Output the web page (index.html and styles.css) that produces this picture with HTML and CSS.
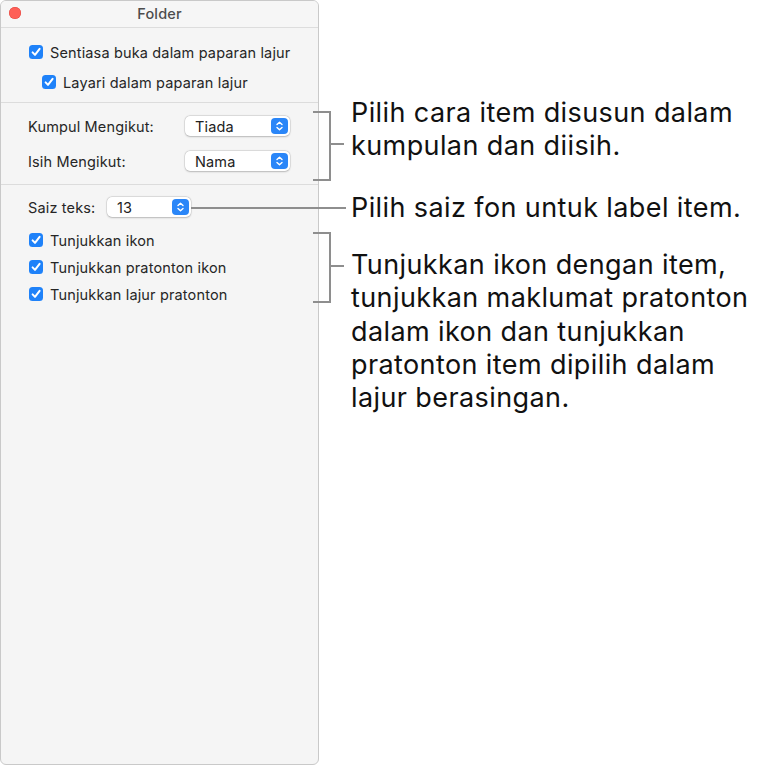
FILE: index.html
```html
<!DOCTYPE html>
<html>
<head>
<meta charset="utf-8">
<link rel="stylesheet" href="styles.css">
</head>
<body>
<div class="stage">
  <div class="window">
    <div class="titlebar">
      <span class="close"></span>
      <span class="title">Folder</span>
    </div>
    <div class="section s1">
      <div class="check"><svg class="box" viewBox="0 0 14 14"><rect width="14" height="14" rx="3.5"/><path d="M3.6 7.4 L6 9.9 L10.6 3.9"/></svg><span>Sentiasa buka dalam paparan lajur</span></div>
      <div class="check indent"><svg class="box" viewBox="0 0 14 14"><rect width="14" height="14" rx="3.5"/><path d="M3.6 7.4 L6 9.9 L10.6 3.9"/></svg><span>Layari dalam paparan lajur</span></div>
    </div>
    <div class="section s2">
      <div class="row"><span class="lbl">Kumpul Mengikut:</span><div class="popup wide"><span>Tiada</span><svg class="step" viewBox="0 0 17 16"><rect width="17" height="16" rx="4"/><path d="M6 6.6 L8.5 4.2 L11 6.6 M6 9.4 L8.5 11.8 L11 9.4"/></svg></div></div>
      <div class="row"><span class="lbl">Isih Mengikut:</span><div class="popup wide"><span>Nama</span><svg class="step" viewBox="0 0 17 16"><rect width="17" height="16" rx="4"/><path d="M6 6.6 L8.5 4.2 L11 6.6 M6 9.4 L8.5 11.8 L11 9.4"/></svg></div></div>
    </div>
    <div class="section s3">
      <div class="row"><span class="lbl short">Saiz teks:</span><div class="popup narrow"><span>13</span><svg class="step" viewBox="0 0 17 16"><rect width="17" height="16" rx="4"/><path d="M6 6.6 L8.5 4.2 L11 6.6 M6 9.4 L8.5 11.8 L11 9.4"/></svg></div></div>
      <div class="checks">
        <div class="check"><svg class="box" viewBox="0 0 14 14"><rect width="14" height="14" rx="3.5"/><path d="M3.6 7.4 L6 9.9 L10.6 3.9"/></svg><span>Tunjukkan ikon</span></div>
        <div class="check"><svg class="box" viewBox="0 0 14 14"><rect width="14" height="14" rx="3.5"/><path d="M3.6 7.4 L6 9.9 L10.6 3.9"/></svg><span>Tunjukkan pratonton ikon</span></div>
        <div class="check"><svg class="box" viewBox="0 0 14 14"><rect width="14" height="14" rx="3.5"/><path d="M3.6 7.4 L6 9.9 L10.6 3.9"/></svg><span>Tunjukkan lajur pratonton</span></div>
      </div>
    </div>
  </div>

  <div class="callouts">
    <div class="callout c1">
      <div class="bracket b1"></div>
      <p class="note">Pilih cara item disusun dalam<br>kumpulan dan diisih.</p>
    </div>
    <div class="callout c2">
      <div class="leader"></div>
      <p class="note">Pilih saiz fon untuk label item.</p>
    </div>
    <div class="callout c3">
      <div class="bracket b3"></div>
      <p class="note">Tunjukkan ikon dengan item,<br>tunjukkan maklumat pratonton<br>dalam ikon dan tunjukkan<br>pratonton item dipilih dalam<br>lajur berasingan.</p>
    </div>
  </div>
</div>
</body>
</html>
```

FILE: styles.css
```css
* { box-sizing: border-box; }
html, body { margin: 0; padding: 0; background: #ffffff; }
body { font-family: Inter, Roboto, "Liberation Sans", sans-serif; }

.stage { position: relative; width: 761px; height: 766px; }

.window {
  width: 319px;
  height: 765px;
  background: #f5f5f5;
  border: 1px solid #c9c9c9;
  border-radius: 6px;
  display: flex;
  flex-direction: column;
  overflow: hidden;
  color: #262626;
  font-size: 14.5px;
  letter-spacing: 0.15px;
}

.titlebar {
  height: 27px;
  flex: none;
  display: flex;
  align-items: center;
  justify-content: center;
  position: relative;
  border-bottom: 1px solid #dddddd;
  background: #f6f6f6;
}
.close {
  position: absolute;
  left: 8px;
  top: 6px;
  width: 12px;
  height: 12px;
  border-radius: 50%;
  background: #fe5f57;
  box-shadow: inset 0 0 0 0.5px #e2463f;
}
.title { font-size: 14.5px; font-weight: 500; color: #4d4d4d; margin-top: -1px; }

.section { flex: none; border-bottom: 1px solid #dcdcdc; padding-left: 27px; }
.section.s3 { border-bottom: none; }

.s1 { height: 75px; padding-top: 15px; display: flex; flex-direction: column; gap: 12px; }
.s2 { height: 82px; padding-top: 13px; display: flex; flex-direction: column; gap: 15px; }
.s3 { padding-top: 12px; display: flex; flex-direction: column; gap: 14px; }

.check { display: flex; align-items: center; height: 18px; gap: 7px; padding-left: 1px; }
.check.indent { padding-left: 14px; }
.box { width: 14px; height: 14px; flex: none; }
.box rect { fill: #1f82f9; }
.box path { fill: none; stroke: #ffffff; stroke-width: 2; stroke-linecap: round; stroke-linejoin: round; }

.checks { display: flex; flex-direction: column; gap: 9px; }

.row { display: flex; align-items: center; height: 20px; }
.lbl { width: 157px; flex: none; }
.lbl.short { width: 79px; }

.popup {
  height: 20px;
  background: #ffffff;
  border-radius: 5px;
  box-shadow: 0 0 0 0.5px rgba(0,0,0,0.12), 0 0.5px 2px rgba(0,0,0,0.2);
  display: flex;
  align-items: center;
  justify-content: space-between;
  padding: 0 2px 0 10px;
  color: #222;
}
.popup.wide { width: 105px; }
.popup.narrow { width: 84px; }
.step { width: 17px; height: 16px; flex: none; }
.step rect { fill: #2a86f8; }
.step path { fill: none; stroke: #ffffff; stroke-width: 1.4; stroke-linecap: round; stroke-linejoin: round; }

/* annotation overlay */
.callouts {
  position: absolute;
  left: 0;
  top: 0;
  width: 761px;
  display: flex;
  flex-direction: column;
}
.callout { display: flex; align-items: flex-start; }
.note {
  margin: 0;
  font-size: 27px;
  letter-spacing: 0.4px;
  line-height: 33px;
  color: #111111;
  font-family: Inter, Roboto, "Liberation Sans", sans-serif;
  white-space: nowrap;
}
.bracket {
  position: relative;
  flex: none;
  width: 18px;
  border: 2px solid #8e8e8e;
  border-left: none;
}
.bracket::after {
  content: "";
  position: absolute;
  left: 100%;
  width: 15px;
  height: 2px;
  background: #8e8e8e;
}
.c1 { margin-top: 96px; padding-left: 313px; }
.b1 { margin-top: 15px; height: 70px; }
.b1::after { top: 30px; }
.c1 .note { margin-left: 20px; }

.c2 { margin-top: 10px; padding-left: 191px; align-items: center; }
.leader { width: 155px; height: 2px; background: #8e8e8e; flex: none; }
.c2 .note { margin-left: 5px; }

.c3 { margin-top: 8px; padding-left: 313px; }
.b3 { height: 71px; }
.b3::after { top: 31px; }
.c3 .note { margin-left: 20px; margin-top: 16px; line-height: 33.3px; }
```
